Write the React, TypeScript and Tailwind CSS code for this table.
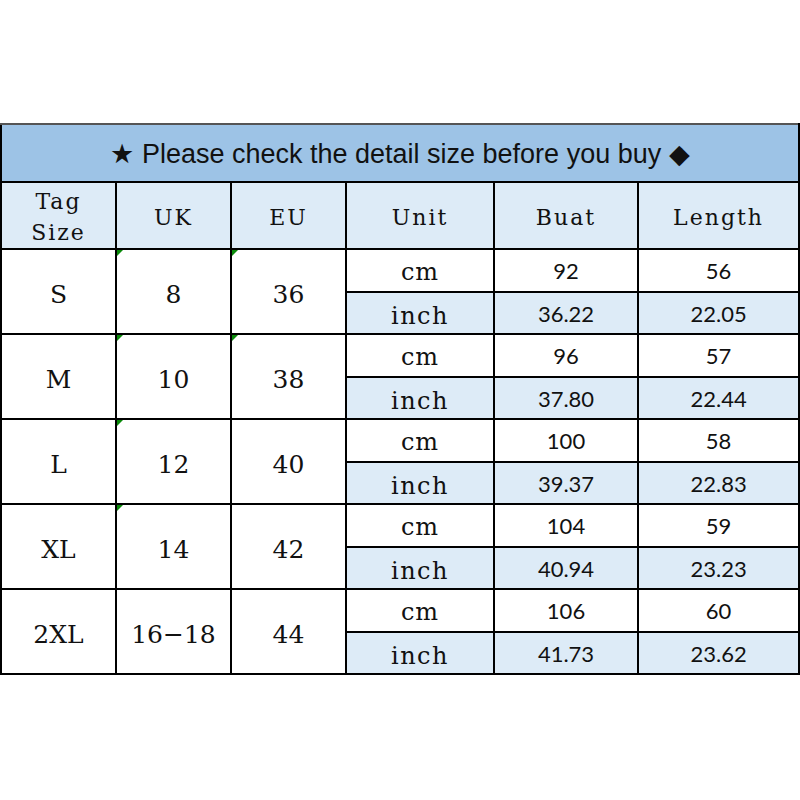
const rows = [
  { size: 'S', uk: '8', eu: '36', cm: ['92', '56'], inch: ['36.22', '22.05'], mark: [true, true] },
  { size: 'M', uk: '10', eu: '38', cm: ['96', '57'], inch: ['37.80', '22.44'], mark: [true, true] },
  { size: 'L', uk: '12', eu: '40', cm: ['100', '58'], inch: ['39.37', '22.83'], mark: [true, false] },
  { size: 'XL', uk: '14', eu: '42', cm: ['104', '59'], inch: ['40.94', '23.23'], mark: [true, false] },
  { size: '2XL', uk: '16−18', eu: '44', cm: ['106', '60'], inch: ['41.73', '23.62'], mark: [false, false] },
];

const serif = "font-['DejaVu_Serif',serif]";
const sans = "font-['Lato','Open_Sans',sans-serif]";

// little green corner flag, like a spreadsheet "number stored as text" marker
function Flag() {
  return (
    <svg className="absolute left-0 top-0" width="6" height="6" viewBox="0 0 6 6">
      <polygon points="0,0 6,0 0,6" fill="#0a8a0a" />
    </svg>
  );
}

export default function App() {
  return (
    <div className="w-[800px] h-[800px] bg-white pt-[123px]">
      <table className="table-fixed border-collapse w-[799px] text-[#111]">
        <colgroup>
          <col className="w-[115px]" />
          <col className="w-[115px]" />
          <col className="w-[115px]" />
          <col className="w-[148px]" />
          <col className="w-[144px]" />
          <col className="w-[161px]" />
        </colgroup>
        <thead>
          <tr className="h-[58px]">
            <th
              colSpan={6}
              className="border-2 border-black border-t-[#555] bg-[#9dc3e6] font-['Liberation_Sans',Arial,sans-serif] text-[27px] font-normal pt-[3px]"
            >
              ★ Please check the detail size before you buy ◆
            </th>
          </tr>
          <tr className={`h-[66px] bg-[#ddebf7] ${serif} text-[22px] font-normal tracking-[2px]`}>
            <th className="border-2 border-black font-normal leading-[31px] pt-[3px] pb-0">
              Tag
              <br />
              Size
            </th>
            <th className="border-2 border-black font-normal pt-[3px]">UK</th>
            <th className="border-2 border-black font-normal pt-[3px]">EU</th>
            <th className="border-2 border-black font-normal pt-[3px]">Unit</th>
            <th className="border-2 border-black font-normal pt-[3px]">Buat</th>
            <th className="border-2 border-black font-normal pt-[3px]">Length</th>
          </tr>
        </thead>
        <tbody>
          {rows.map((r) => (
            <>
              <tr key={r.size + 'cm'} className="h-[43px]">
                <td rowSpan={2} className={`border-2 border-black text-center pt-[7px] ${serif} text-[25px]`}>
                  {r.size}
                </td>
                <td rowSpan={2} className={`relative border-2 border-black text-center pt-[7px] ${serif} text-[25px]`}>
                  {r.mark[0] && <Flag />}
                  {r.uk}
                </td>
                <td rowSpan={2} className={`relative border-2 border-black text-center pt-[7px] ${serif} text-[25px]`}>
                  {r.mark[1] && <Flag />}
                  {r.eu}
                </td>
                <td className={`border-2 border-black text-center pt-[3px] ${serif} text-[24px] leading-[32px] tracking-[1px]`}>cm</td>
                <td className={`border-2 border-black text-center ${sans} text-[22px]`}>{r.cm[0]}</td>
                <td className={`border-2 border-black text-center ${sans} text-[22px]`}>{r.cm[1]}</td>
              </tr>
              <tr key={r.size + 'in'} className="h-[42px] bg-[#ddebf7]">
                <td className={`border-2 border-black text-center pt-[5px] ${serif} text-[24px] leading-[32px] tracking-[1.5px]`}>inch</td>
                <td className={`border-2 border-black text-center ${sans} text-[22px]`}>{r.inch[0]}</td>
                <td className={`border-2 border-black text-center ${sans} text-[22px]`}>{r.inch[1]}</td>
              </tr>
            </>
          ))}
        </tbody>
      </table>
    </div>
  );
}
